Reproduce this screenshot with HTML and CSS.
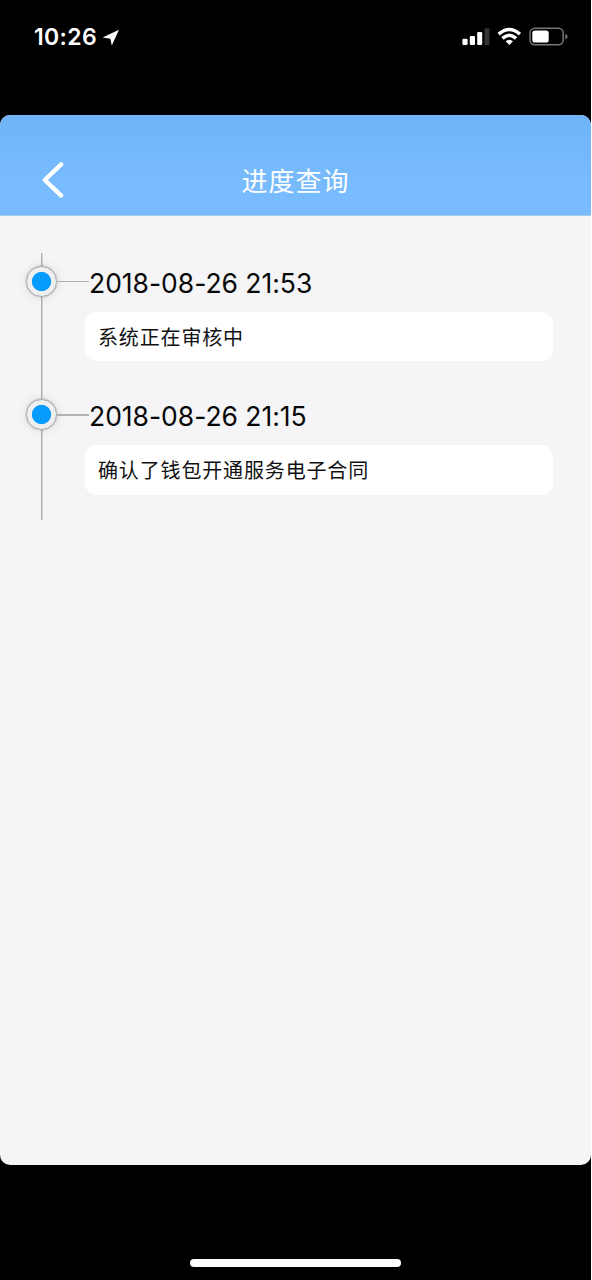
FILE: index.html
```html
<!DOCTYPE html>
<html lang="zh-CN">
<head>
<meta charset="utf-8">
<title>进度查询</title>
<link rel="stylesheet" href="styles.css">
</head>
<body>
<div class="phone">
  <div class="status">
    <span class="clock">10:26</span>
    <svg class="location" width="18" height="18" viewBox="0 0 18 18"><path d="M17 .8L9.8 16.6 8.3 9.7.6 8.6Z" fill="#fff"/></svg>
    <svg class="indicators" width="108" height="20" viewBox="0 0 108 20">
      <g fill="#fff">
        <rect x="0.4" y="11.7" width="5.2" height="6.2" rx="1.2"/>
        <rect x="7.8" y="9" width="5.2" height="8.9" rx="1.2"/>
        <rect x="15.2" y="5" width="5" height="12.9" rx="1.2"/>
        <rect x="22.5" y="1.2" width="5" height="16.7" rx="1.2" fill="#333"/>
      </g>
      <g fill="none" stroke="#fff" stroke-width="3.5">
        <path d="M36.7 7.1Q47.3 -2.2 57.9 7.1"/>
        <path d="M40.5 11.4Q47.3 5.1 54.1 11.4"/>
      </g>
      <path d="M43.6 14.3Q47.3 11.2 51 14.3L47.3 18Z" fill="#fff"/>
      <rect x="68" y="1.2" width="33.2" height="16.6" rx="4.8" fill="none" stroke="#777" stroke-width="1.5"/>
      <rect x="70.3" y="3.4" width="16.4" height="12.2" rx="2.6" fill="#fff"/>
      <path d="M103.3 6.7Q105.6 7.6 105.6 9.6T103.3 12.5Z" fill="#777"/>
    </svg>
  </div>
  <main class="screen">
    <header class="navbar">
      <svg class="back" width="24" height="38" viewBox="0 0 24 38"><path d="M20.2 3.4L3.8 19 20.2 34.6" fill="none" stroke="#fff" stroke-width="4.4" stroke-linecap="round" stroke-linejoin="round"/></svg>
      <h1 class="title">进度查询</h1>
    </header>
    <ol class="timeline">
      <li class="entry">
        <div class="rail"><i class="node"></i><i class="branch"></i></div>
        <div class="body">
          <time class="date">2018-08-26 21:53</time>
          <p class="card">系统正在审核中</p>
        </div>
      </li>
      <li class="entry">
        <div class="rail"><i class="node"></i><i class="branch"></i></div>
        <div class="body">
          <time class="date">2018-08-26 21:15</time>
          <p class="card">确认了钱包开通服务电子合同</p>
        </div>
      </li>
    </ol>
  </main>
  <div class="home"></div>
</div>
</body>
</html>
```
FILE: styles.css
```css
* { box-sizing: border-box; }
body {
  margin: 0;
  background: #fff;
  font-family: Inter, "Noto Sans CJK SC", sans-serif;
}
.phone {
  width: 591px;
  height: 1280px;
  background: #000;
  display: flex;
  flex-direction: column;
}
.status {
  height: 114.5px;
  flex: none;
  display: flex;
  align-items: flex-start;
  padding: 27px 21px 0 34px;
  color: #fff;
}
.clock {
  width: 68px;
  font-size: 23px;
  line-height: 20px;
  font-weight: 600;
  letter-spacing: .35px;
}
.location { margin-top: 2px; }
.indicators { margin-left: auto; }
.screen {
  height: 1050.5px;
  flex: none;
  border-radius: 10px;
  overflow: hidden;
  background: #f5f5f8;
}
.navbar {
  height: 101.5px;
  padding: 46.5px 41px 0;
  display: grid;
  grid-template-columns: 24px 1fr 24px;
  background: linear-gradient(#70b4f8, #78bbff 70%);
  border-bottom: 1px solid #a9c9e8;
}
.title {
  margin: 0;
  color: #fff;
  text-align: center;
  font-size: 26px;
  font-weight: 400;
  line-height: 42px;
  letter-spacing: 1px;
}
.timeline {
  list-style: none;
  margin: 0;
  padding: 37px 38px 0 25px;
}
.entry { display: flex; height: 133.5px; }
.rail {
  width: 60px;
  flex: none;
  display: flex;
  align-items: flex-start;
  padding: 12.6px 0 0 1px;
  background: linear-gradient(#b2b2b4, #b2b2b4) 15.7px 0 / 1.5px 100% no-repeat;
}
.node {
  width: 31px;
  height: 31px;
  flex: none;
  border: 1.5px solid #acacac;
  border-radius: 50%;
  background: radial-gradient(circle, #069bff 9.2px, #eeeff0 10px);
  box-shadow: 0 0 10px rgba(0, 0, 0, .12), 0 0 0 .4px #b2b2b2;
}
.branch {
  width: 32px;
  height: 1.5px;
  flex: none;
  margin-top: 15px;
  background: #b2b2b4;
}
.body { flex: 1; }
.date {
  display: block;
  height: 58.5px;
  padding: 13.5px 0 0 4px;
  font-size: 26.5px;
  line-height: 32px;
  letter-spacing: -.03px;
  color: #080808;
}
.card {
  margin: 0;
  height: 49.5px;
  padding-left: 13px;
  border-radius: 12px;
  background: #fff;
  font-size: 20px;
  line-height: 53.5px;
  letter-spacing: .85px;
  color: #111;
}
.home {
  width: 211px;
  height: 8px;
  margin: 94px 0 0 190px;
  border-radius: 4px;
  background: #fff;
}
```
